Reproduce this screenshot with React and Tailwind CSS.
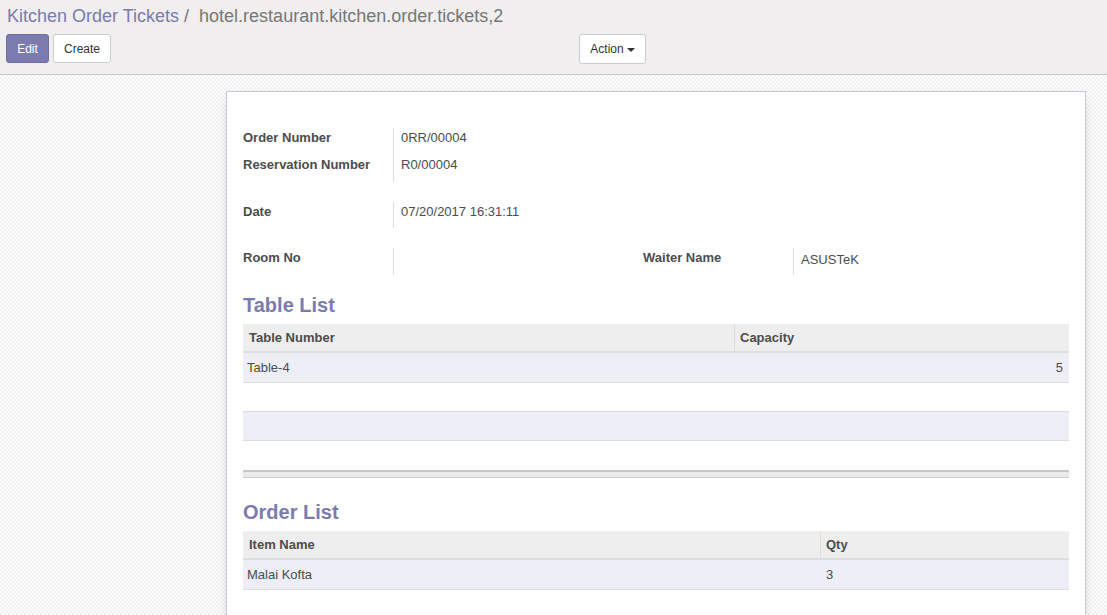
import React from "react";

const font = { fontFamily: '"Liberation Sans", Arial, sans-serif' };

function Field({ label, value, h = "h-[27px]" }) {
  return (
    <div className={`flex ${h} pt-[1px]`}>
      <div className="w-[150px] shrink-0 font-bold leading-[18px] text-[#4c4c4c]">{label}</div>
      <div className="pl-[8px] leading-[18px] text-[#4c4c4c]">{value}</div>
    </div>
  );
}

export default function App() {
  return (
    <div style={font} className="w-[1107px] h-[615px] overflow-hidden text-[13px] text-[#4c4c4c] flex flex-col">
      {/* control panel */}
      <div className="h-[75px] shrink-0 bg-[#f0eeee] border-b border-[#c6c6c6] px-[6px]">
        <div className="pt-[4px] h-[30px] text-[18px] leading-[24px] whitespace-nowrap">
          <span className="text-[#7c7bad] pl-[1px]">Kitchen Order Tickets</span>
          <span className="text-[#777]"> /&nbsp;&nbsp;hotel.restaurant.kitchen.order.tickets,2</span>
        </div>
        <div className="flex items-start mt-[4px]">
          <button className="h-[29px] w-[43px] rounded-[3px] bg-[#7c7bad] border border-[#6f6ea3] text-white text-[12px]">Edit</button>
          <button className="ml-[4px] h-[29px] w-[58px] rounded-[3px] bg-white border border-[#cccccc] text-[#333] text-[12px]">Create</button>
          <button className="ml-[468px] h-[30px] w-[67px] rounded-[3px] bg-white border border-[#cccccc] text-[#333] text-[12px] flex items-center justify-center gap-[3px]">
            Action
            <span className="inline-block w-0 h-0 border-l-[4px] border-r-[4px] border-t-[4px] border-l-transparent border-r-transparent border-t-[#333] mt-[1px]" />
          </button>
        </div>
      </div>

      {/* content */}
      <div className="flex-1 bg-[repeating-conic-gradient(#f1f1f1_0_25%,#fcfcfc_0_50%)] bg-[length:4px_4px] pt-[16px]">
        <div className="ml-[226px] w-[860px] min-h-[600px] bg-white border border-[#c9c7d6] shadow-[0_4px_12px_-6px_rgba(0,0,0,0.35)] px-[16px] pt-[36px]">
          <div className="relative">
            <div className="absolute left-[150px] top-0 bottom-0 border-l border-[#dddddd]" />
            <Field label="Order Number" value="0RR/00004" />
            <Field label="Reservation Number" value="R0/00004" />
          </div>
          <div className="relative mt-[20px]">
            <div className="absolute left-[150px] top-0 bottom-0 border-l border-[#dddddd]" />
            <Field label="Date" value="07/20/2017 16:31:11" h="h-[26px]" />
          </div>
          <div className="grid grid-cols-[400px_1fr] mt-[20px]">
            <div className="relative">
              <div className="absolute left-[150px] top-0 bottom-0 border-l border-[#dddddd]" />
              <Field label="Room No" value="" />
            </div>
            <div className="relative">
              <div className="absolute left-[150px] top-0 bottom-0 border-l border-[#dddddd]" />
              <Field label="Waiter Name" value={<span className="relative top-[2px]">ASUSTeK</span>} />
            </div>
          </div>

          {/* Table List */}
          <h2 className="mt-[18px] h-[24px] text-[20px] leading-[24px] font-bold text-[#7c7bad]">Table List</h2>
          <div className="mt-[7px]">
            <div className="flex h-[29px] bg-[#eeeeee] border-b-2 border-[#dddddd] font-bold">
              <div className="w-[492px] px-[6px] leading-[27px] border-r border-[#dddddd]">Table Number</div>
              <div className="flex-1 px-[5px] leading-[27px]">Capacity</div>
            </div>
            <div className="flex h-[30px] bg-[#eeeef6] border-b border-[#dddddd]">
              <div className="w-[492px] px-[4px] leading-[29px]">Table-4</div>
              <div className="flex-1 px-[6px] leading-[29px] text-right">5</div>
            </div>
            <div className="h-[29px] bg-white border-b border-[#dddddd]" />
            <div className="h-[29px] bg-[#eeeef6] border-b border-[#dddddd]" />
            <div className="h-[29px] bg-white" />
            <div className="h-[8px] bg-[#eaeaea] border-t-2 border-b border-t-[#c8c8c8] border-b-[#cccccc]" />
          </div>

          {/* Order List */}
          <h2 className="mt-[22px] h-[24px] text-[20px] leading-[24px] font-bold text-[#7c7bad]">Order List</h2>
          <div className="mt-[7px]">
            <div className="flex h-[29px] bg-[#eeeeee] border-b-2 border-[#dddddd] font-bold">
              <div className="w-[578px] px-[6px] leading-[27px] border-r border-[#dddddd]">Item Name</div>
              <div className="flex-1 px-[5px] leading-[27px]">Qty</div>
            </div>
            <div className="flex h-[30px] bg-[#eeeef6] border-b border-[#dddddd]">
              <div className="w-[578px] px-[4px] leading-[29px]">Malai Kofta</div>
              <div className="flex-1 px-[5px] leading-[29px]">3</div>
            </div>
          </div>
        </div>
      </div>
    </div>
  );
}
